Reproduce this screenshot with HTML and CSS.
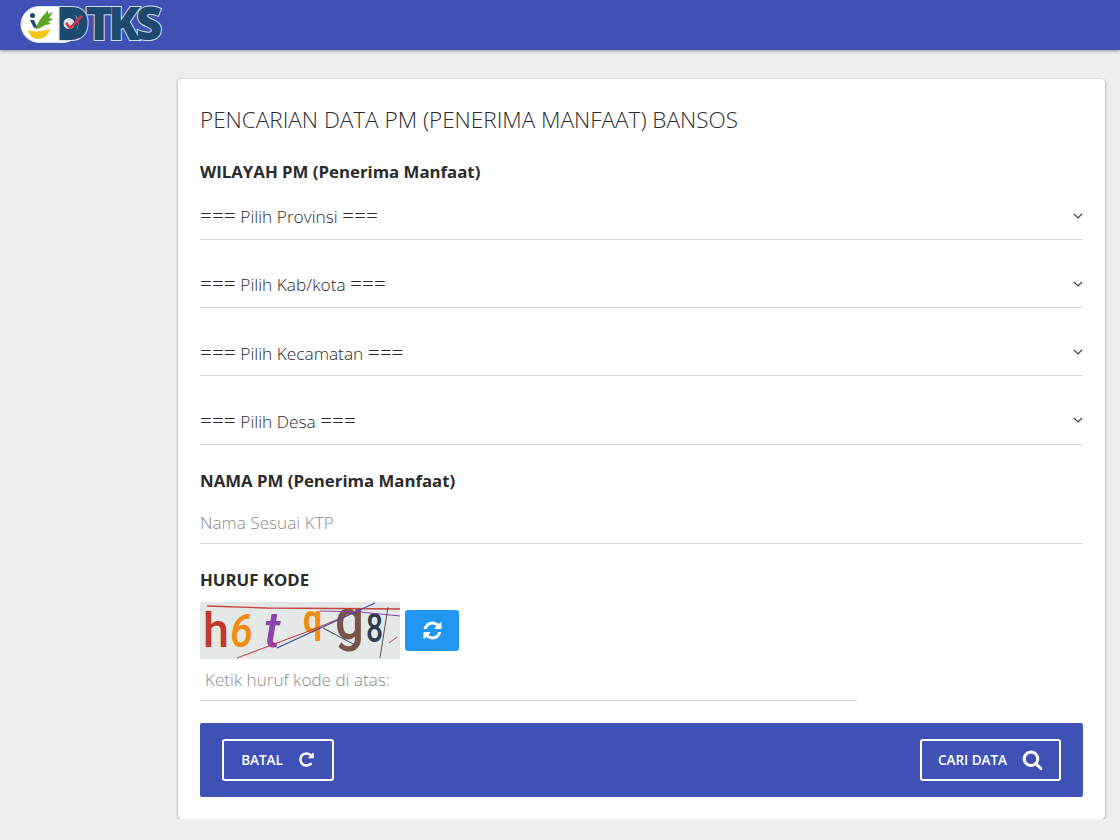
FILE: index.html
```html
<!DOCTYPE html>
<html lang="id">
<head>
<meta charset="UTF-8" />
<meta name="viewport" content="width=device-width, initial-scale=1" />
<title>Pencarian Data PM Bansos</title>
<link rel="stylesheet" href="styles.css">
</head>
<body>

<header class="topbar">
  <svg class="logo" width="144" height="40" viewBox="0 0 144 40" role="img" aria-label="DTKS">
    <rect x="1" y="1.500" width="60" height="36" rx="18" fill="#fff" stroke="#cfe0ea" />
    <path d="M8 25c4 2 12 2 22-1-1 6-6 10-12 10-5 0-9-4-10-9z" fill="#f5c518" />
    <path d="M15 24c3-6 6-12 10-15l3-4 0 4 5-2-4 6 4 1-5 3 3 2-6 1c-3 2-6 4-10 4z" fill="#5aa51f" />
    <circle cx="12.500" cy="10.500" r="2.500" fill="#1c4a6e" />
    <path d="M10 15l4 0 3 7-3 1z" fill="#1c4a6e" />
    <text class="logo-text" x="36" y="35">DTKS</text>
    <ellipse cx="50" cy="19" rx="8" ry="11" fill="#1c4a6e" />
    <circle cx="49" cy="18.500" r="5.500" fill="#fff" opacity="0.850" />
    <path d="M46 18l4 5 12-12" fill="none" stroke="#d9304a" stroke-width="2.500" />
  </svg>
</header>

<main class="card">
  <h1 class="page-title">PENCARIAN DATA PM (PENERIMA MANFAAT) BANSOS</h1>

  <form class="search-form">
    <h2 class="group-label">WILAYAH PM (Penerima Manfaat)</h2>
    <div class="select-row"><span><span class="eq">===</span> Pilih Provinsi <span class="eq">===</span></span><svg class="chev" width="10" height="6" viewBox="0 0 10 6"><path d="M1 1l4 4 4-4" fill="none" stroke="#444" stroke-width="1.200" /></svg></div>
    <div class="select-row"><span><span class="eq">===</span> Pilih Kab/kota <span class="eq">===</span></span><svg class="chev" width="10" height="6" viewBox="0 0 10 6"><path d="M1 1l4 4 4-4" fill="none" stroke="#444" stroke-width="1.200" /></svg></div>
    <div class="select-row"><span><span class="eq">===</span> Pilih Kecamatan <span class="eq">===</span></span><svg class="chev" width="10" height="6" viewBox="0 0 10 6"><path d="M1 1l4 4 4-4" fill="none" stroke="#444" stroke-width="1.200" /></svg></div>
    <div class="select-row"><span><span class="eq">===</span> Pilih Desa <span class="eq">===</span></span><svg class="chev" width="10" height="6" viewBox="0 0 10 6"><path d="M1 1l4 4 4-4" fill="none" stroke="#444" stroke-width="1.200" /></svg></div>

    <h2 class="group-label name-label">NAMA PM (Penerima Manfaat)</h2>
    <div class="text-row">Nama Sesuai KTP</div>

    <h2 class="group-label code-label">HURUF KODE</h2>
    <div class="captcha-row">
      <svg class="captcha" width="200" height="57" viewBox="0 0 200 57">
        <rect width="200" height="57" fill="#e4e8e6" />
        <text x="3" y="45" class="cap cap-h" textLength="26" lengthAdjust="spacingAndGlyphs">h</text>
        <text x="30" y="45" class="cap cap-6" textLength="23" lengthAdjust="spacingAndGlyphs">6</text>
        <text x="64" y="45" class="cap cap-t">t</text>
        <text x="103" y="31" class="cap cap-q" textLength="19" lengthAdjust="spacingAndGlyphs">q</text>
        <text x="135" y="37" class="cap cap-g" textLength="29" lengthAdjust="spacingAndGlyphs">g</text>
        <text x="166" y="40" class="cap cap-8" textLength="17" lengthAdjust="spacingAndGlyphs">8</text>
        <path d="M7 4l60 2 133 1" fill="none" stroke="#c8453c" stroke-width="1.300" />
        <path d="M37 56l80-30 43-18" fill="none" stroke="#c8353c" stroke-width="1" />
        <path d="M77 46L175 1" fill="none" stroke="#3c4cb0" stroke-width="1.200" />
        <path d="M120 9l40 1 40 4" fill="none" stroke="#8e44ad" stroke-width="1.200" />
        <path d="M123 26l32 17" fill="none" stroke="#34495e" stroke-width="1" />
        <path d="M188 5l-8 51" fill="none" stroke="#555" stroke-width="1" />
        <path d="M189 41l8-6" fill="none" stroke="#d0404a" stroke-width="1" />
      </svg>
      <button type="button" class="refresh-btn" aria-label="Muat ulang">
        <svg width="21" height="21" viewBox="0 0 1792 1792"><path fill="#fff" d="M1639 1056q0 5-1 7-64 268-268 434.500t-478 166.500q-146 0-282.500-55t-243.500-157l-129 129q-19 19-45 19t-45-19-19-45v-448q0-26 19-45t45-19h448q26 0 45 19t19 45-19 45l-137 137q71 66 161 102t187 36q134 0 250-65t186-179q11-17 53-117 8-23 30-23h192q13 0 22.500 9.500t9.500 22.500zm25-800v448q0 26-19 45t-45 19h-448q-26 0-45-19t-19-45 19-45l138-138q-148-137-349-137-134 0-250 65t-186 179q-11 17-53 117-8 23-30 23h-199q-13 0-22.500-9.500t-9.500-22.500v-7q65-268 270-434.500t480-166.500q146 0 284 55.500t245 156.500l130-129q19-19 45-19t45 19 19 45z" /></svg>
      </button>
    </div>
    <div class="code-input">Ketik huruf kode di atas:</div>

    <div class="action-bar">
      <button type="button" class="outline-btn btn-batal">BATAL
        <svg width="17" height="17" viewBox="0 0 1792 1792"><path fill="#fff" d="M1664 256v448q0 26-19 45t-45 19h-448q-42 0-59-40-17-39 14-69l138-138q-148-137-349-137-104 0-198.500 40.500t-163.500 109.500-109.500 163.500-40.500 198.500 40.500 198.500 109.500 163.500 163.500 109.500 198.500 40.500q119 0 225-52t179-147q7-10 23-12 15 0 25 9l137 138q9 8 9.500 20.500t-7.500 22.500q-109 132-264 204.500t-327 72.500q-156 0-298-61t-245-164-164-245-61-298 61-298 164-245 245-164 298-61q147 0 284.500 55.500t244.500 156.500l130-129q29-31 70-14 39 17 39 59z" /></svg>
      </button>
      <button type="button" class="outline-btn btn-cari">CARI DATA
        <svg width="21" height="21" viewBox="0 0 1792 1792"><path fill="#fff" d="M1216 832q0-185-131.500-316.500t-316.500-131.500-316.500 131.500-131.500 316.500 131.500 316.500 316.500 131.500 316.500-131.500 131.500-316.500zm512 832q0 52-38 90t-90 38q-54 0-90-38l-343-342q-179 124-399 124-143 0-273.500-55.500t-225-150-150-225-55.500-273.500 55.500-273.500 150-225 225-150 273.500-55.500 273.500 55.500 225 150 150 225 55.500 273.500q0 220-124 399l343 343q37 37 37 90z" /></svg>
      </button>
    </div>
  </form>
</main>

</body>
</html>
```

FILE: styles.css
```css
body {
  margin: 0;
  background: #eeeeee;
  color: #2b2b2b;
  font-family: 'Open Sans', sans-serif;
}
.topbar {
  height: 50px;
  background: #3f51b5;
  box-shadow: 0 1px 3px rgba(0,0,0,0.4);
  padding-left: 20px;
  display: flex;
  align-items: center;
}
.logo {
  overflow: visible;
}
.logo-text {
  font-family: 'Open Sans', sans-serif;
  font-weight: 800;
  font-size: 46px;
  letter-spacing: -4.300px;
  fill: #1c4a6e;
  stroke: #cfe0ea;
  stroke-width: 2;
  paint-order: stroke;
}
.card {
  width: 927px;
  height: 740px;
  box-sizing: border-box;
  margin: 29px 0 0 178px;
  padding: 27px 22px 0;
  background: #fff;
  border-radius: 4px;
  box-shadow: 0 1px 3px rgba(0,0,0,0.4);
}
.page-title {
  margin: 0;
  font-size: 22.500px;
  font-weight: 300;
  line-height: 27px;
}
.group-label {
  margin: 0;
  font-size: 16.800px;
  font-weight: 700;
  line-height: 22px;
}
.search-form {
  margin-top: 28px;
}
.search-form > .group-label:first-child {
  margin-bottom: 11.400px;
}
.select-row {
  height: 44.300px;
  margin-bottom: 23px;
  display: flex;
  justify-content: space-between;
  align-items: center;
  border-bottom: 1px solid #d8d8d8;
  font-size: 17.300px;
  font-weight: 300;
}
.select-row .chev {
  margin: 0 0 2px;
}
.select-row:last-of-type {
  margin-bottom: 0;
}
.eq {
  font-size: 20.900px;
  line-height: 1;
}
.name-label {
  margin-top: 25px;
}
.text-row {
  height: 43px;
  padding-top: 8px;
  line-height: 45px;
  border-bottom: 1px solid #d8d8d8;
  color: #8a8a8a;
  font-size: 17.200px;
  font-weight: 300;
}
.code-label {
  margin-top: 25px;
}
.captcha-row {
  margin-top: 11.400px;
  display: flex;
  align-items: center;
  gap: 5px;
}
.captcha {
  display: block;
  overflow: visible;
}
.cap {
  font-family: Roboto, sans-serif;
  font-weight: 500;
}
.cap-h { font-size: 48px; fill: #c0392b; }
.cap-6 { font-size: 46px; fill: #f28c10; font-style: italic; }
.cap-t { font-size: 50px; fill: #8e44ad; font-style: italic; }
.cap-q { font-size: 40px; fill: #f28c10; font-weight: 700; }
.cap-g { font-size: 58px; fill: #795548; }
.cap-8 { font-size: 40px; fill: #2c3e50; }
.refresh-btn {
  width: 54px;
  height: 41px;
  padding: 0;
  border: none;
  border-radius: 3px;
  background: #2196f3;
  display: flex;
  align-items: center;
  justify-content: center;
}
.code-input {
  width: 652px;
  height: 41px;
  padding-left: 5px;
  line-height: 42px;
  border-bottom: 1px solid #d8d8d8;
  color: #8a8a8a;
  font-size: 17.100px;
  font-weight: 300;
}
.action-bar {
  height: 74px;
  margin-top: 22px;
  padding: 0 22px;
  box-sizing: border-box;
  display: flex;
  justify-content: space-between;
  align-items: center;
  background: #3f51b5;
  border-radius: 2px;
}
.outline-btn {
  height: 42px;
  box-sizing: border-box;
  padding: 0;
  display: flex;
  align-items: center;
  justify-content: center;
  background: transparent;
  border: 2px solid #fff;
  border-radius: 3px;
  color: #fff;
  font-family: 'Open Sans', sans-serif;
  font-size: 13.500px;
  font-weight: 600;
}
.btn-batal {
  width: 112px;
  gap: 15px;
}
.btn-cari {
  width: 141px;
  gap: 15px;
}
```
